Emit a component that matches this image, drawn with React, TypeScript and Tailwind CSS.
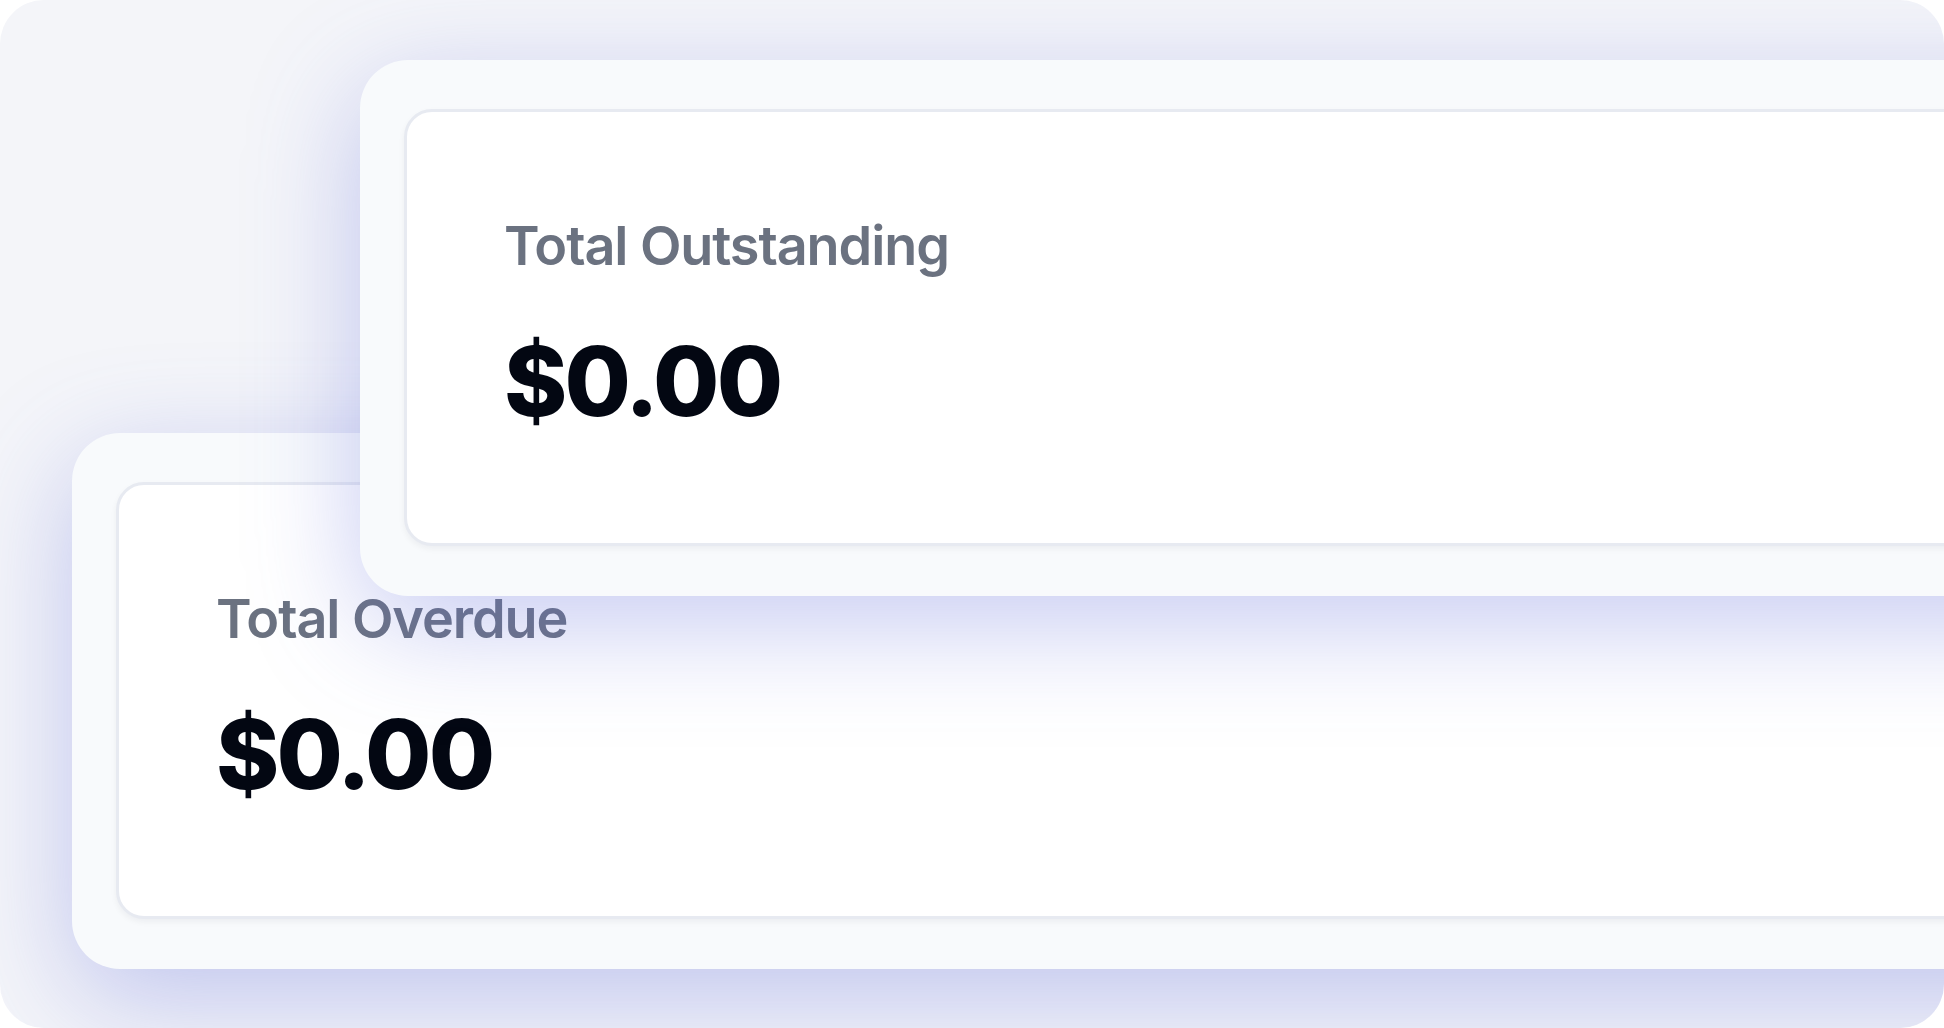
export default function App() {
  const cards = [
    { label: "Total Outstanding", value: "$0.00", offset: "ml-[360px] mt-[60px] z-10" },
    { label: "Total Overdue", value: "$0.00", offset: "ml-[72px] -mt-[163px] z-0" },
  ]

  return (
    <div className="min-h-screen bg-white font-['Inter',sans-serif]">
      <div className="h-[1028px] overflow-hidden rounded-[44px] bg-[#f4f5f9] flex flex-col">
        {cards.map((card) => (
          <div
            key={card.label}
            className={`relative ${card.offset} -mr-[200px] rounded-[48px] bg-[#f8fafc] pl-[44px] pr-[44px] pt-[49px] pb-[50px] shadow-[0_30px_110px_rgba(100,112,220,0.36)]`}
          >
            {/* inner card */}
            <div className="h-[437px] rounded-[28px] border-[3px] border-[#e7eaf1] bg-white pl-[97px] pt-[107px] shadow-[0_3px_6px_rgba(15,23,42,0.05)]">
              <p className="text-[54px] leading-none font-semibold text-[#6b7280] tracking-[-0.02em]">
                {card.label}
              </p>
              <p className="mt-[60px] text-[96px] leading-none font-extrabold text-[#030712] tracking-[-0.03em]">
                {card.value}
              </p>
            </div>
          </div>
        ))}
      </div>
    </div>
  )
}
